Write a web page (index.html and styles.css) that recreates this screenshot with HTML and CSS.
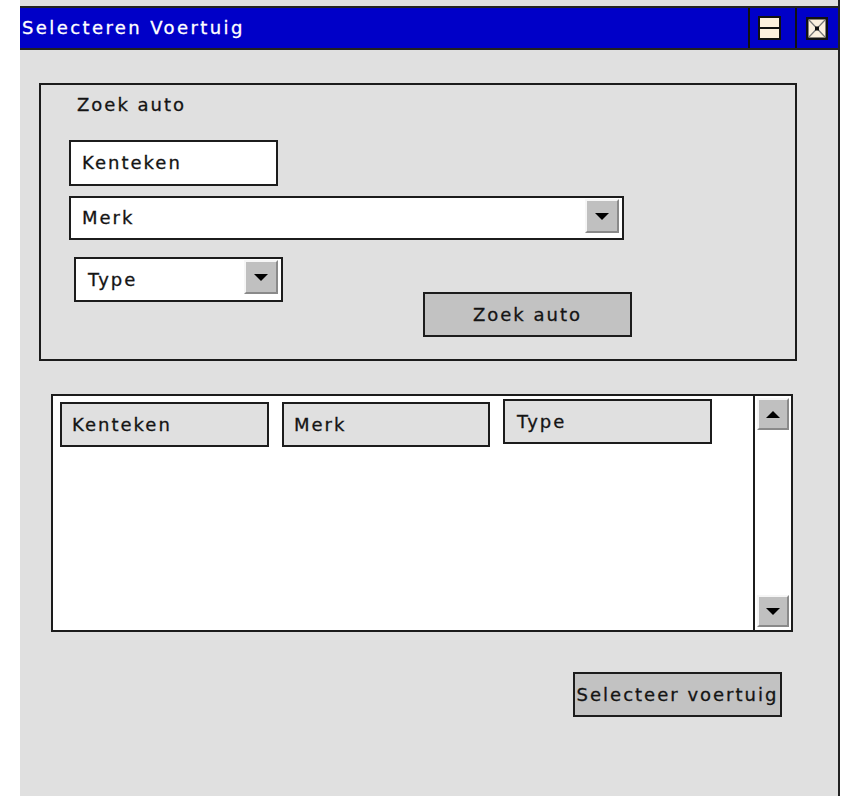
FILE: index.html
```html
<!DOCTYPE html>
<html lang="nl">
<head>
<meta charset="utf-8">
<title>Selecteren Voertuig</title>
<link rel="stylesheet" href="styles.css">
</head>
<body>
<div class="window">
  <div class="titlebar">
    <span class="title">Selecteren Voertuig</span>
    <div class="tb-btn tb-zoom">
      <svg width="23" height="24" viewBox="0 0 23 24" aria-hidden="true">
        <rect x="1" y="1" width="21" height="22" fill="#fcf0de" stroke="#111" stroke-width="2"/>
        <line x1="1" y1="12" x2="22" y2="12" stroke="#111" stroke-width="2"/>
      </svg>
    </div>
    <div class="tb-btn tb-close">
      <svg width="22" height="23" viewBox="0 0 22 23" aria-hidden="true">
        <rect x="1.25" y="1.25" width="19.5" height="20.5" fill="#fcf0de" stroke="#111" stroke-width="2.5"/>
        <line x1="3" y1="3" x2="19" y2="20" stroke="#777" stroke-width="1.2"/>
        <line x1="19" y1="3" x2="3" y2="20" stroke="#777" stroke-width="1.2"/>
        <rect x="9" y="9.5" width="4" height="4" fill="#111"/>
      </svg>
    </div>
  </div>

  <div class="content">
    <section class="group">
      <div class="group-label">Zoek auto</div>
      <div class="field field-plate">Kenteken</div>
      <div class="combo combo-make">
        <span class="combo-text">Merk</span>
        <span class="drop"></span>
      </div>
      <div class="search-row">
        <div class="combo combo-type">
          <span class="combo-text">Type</span>
          <span class="drop"></span>
        </div>
        <button class="btn btn-search" type="button">Zoek auto</button>
      </div>
    </section>

    <section class="results">
      <div class="results-cols">
        <div class="col-head col-plate">Kenteken</div>
        <div class="col-head col-make">Merk</div>
        <div class="col-head col-type">Type</div>
      </div>
      <div class="scrollbar">
        <span class="scroll-btn scroll-up"></span>
        <span class="scroll-btn scroll-down"></span>
      </div>
    </section>

    <div class="actions">
      <button class="btn btn-select" type="button">Selecteer voertuig</button>
    </div>
  </div>
</div>
</body>
</html>
```

FILE: styles.css
```css
html,
body {
  margin: 0;
  background: #ffffff;
}

body {
  font-family: "DejaVu Sans", "Liberation Sans", sans-serif;
  font-size: 18px;
  letter-spacing: 2px;
  color: #141414;
  -webkit-text-stroke: 0.3px currentColor;
}

/* dialog window */
.window {
  margin-left: 20px;
  width: 820px;
  height: 796px;
  box-sizing: border-box;
  padding-top: 6px;
  background: #e0e0e0;
  border-right: 2px solid #222;
  display: flex;
  flex-direction: column;
}

.titlebar {
  height: 44px;
  box-sizing: border-box;
  border-top: 2px solid #222;
  border-bottom: 2px solid #222;
  background: #0000c8;
  display: flex;
}

.title {
  flex: 1;
  display: flex;
  align-items: center;
  padding-left: 2px;
  line-height: 20px;
  letter-spacing: 2.4px;
  color: #ffffff;
}

.tb-btn {
  border-left: 2px solid #111;
  display: flex;
  align-items: center;
  box-sizing: border-box;
}

.tb-zoom {
  width: 47px;
  padding-left: 8px;
}

.tb-close {
  width: 43px;
  padding-left: 9px;
}

.content {
  flex: 1;
  display: flex;
  flex-direction: column;
}

/* search group */
.group {
  margin: 33px 0 0 19px;
  width: 758px;
  height: 278px;
  box-sizing: border-box;
  border: 2px solid #1c1c1c;
  padding-top: 10px;
  display: flex;
  flex-direction: column;
}

.group-label {
  line-height: 20px;
  margin-left: 36px;
}

.field,
.combo {
  box-sizing: border-box;
  border: 2px solid #1c1c1c;
  background: #ffffff;
  line-height: 20px;
}

.field {
  display: flex;
  align-items: center;
  padding-left: 11px;
}

.field-plate {
  margin: 25px 0 0 28px;
  width: 209px;
  height: 46px;
}

.combo {
  display: flex;
  align-items: flex-start;
  padding-left: 11px;
  padding-right: 3px;
}

.combo-text {
  flex: 1;
  align-self: center;
}

.combo-make {
  margin: 10px 0 0 28px;
  width: 555px;
  height: 44px;
}

.search-row {
  display: flex;
  align-items: flex-start;
  margin-top: 17px;
}

.combo-type {
  margin-left: 33px;
  width: 209px;
  height: 45px;
  padding-left: 12px;
}

/* bevelled arrow buttons */
.drop,
.scroll-btn {
  box-sizing: border-box;
  background: #c0c0c0;
  border-top: 2px solid #f6f6f6;
  border-left: 2px solid #f6f6f6;
  border-bottom: 2px solid #8a8a8a;
  border-right: 2px solid #8a8a8a;
  display: flex;
  align-items: center;
  justify-content: center;
}

.drop {
  width: 34px;
  height: 34px;
  margin-top: 1px;
}

.drop::after,
.scroll-down::after {
  content: "";
  border-left: 7px solid transparent;
  border-right: 7px solid transparent;
  border-top: 7px solid #000;
}

.scroll-up::after {
  content: "";
  border-left: 7px solid transparent;
  border-right: 7px solid transparent;
  border-bottom: 7px solid #000;
}

/* push buttons */
.btn {
  box-sizing: border-box;
  border: 2px solid #1c1c1c;
  background: #c2c2c2;
  font: inherit;
  letter-spacing: inherit;
  color: inherit;
  line-height: 20px;
  padding: 0;
  white-space: nowrap;
  display: flex;
  align-items: center;
  justify-content: center;
}

.btn-search {
  margin: 35px 0 0 140px;
  width: 209px;
  height: 45px;
}

/* result list */
.results {
  margin: 33px 0 0 31px;
  width: 742px;
  height: 238px;
  box-sizing: border-box;
  border: 2px solid #1c1c1c;
  background: #ffffff;
  display: flex;
}

.results-cols {
  flex: 1;
  display: flex;
  align-items: flex-start;
  gap: 13px;
  padding-left: 7px;
}

.col-head {
  box-sizing: border-box;
  height: 45px;
  border: 2px solid #1c1c1c;
  background: #e0e0e0;
  display: flex;
  align-items: center;
  padding-left: 10px;
  line-height: 20px;
  margin-top: 6px;
}

.col-plate {
  width: 209px;
}

.col-make {
  width: 208px;
}

.col-type {
  width: 209px;
  margin-top: 3px;
  padding-left: 12px;
}

.scrollbar {
  width: 38px;
  box-sizing: border-box;
  border-left: 2px solid #1c1c1c;
  padding: 2px 2px 3px 2px;
  display: flex;
  flex-direction: column;
  justify-content: space-between;
}

.scroll-btn {
  width: 32px;
  height: 32px;
}

.actions {
  display: flex;
  justify-content: flex-end;
  margin-top: 40px;
  padding-right: 56px;
}

.btn-select {
  width: 209px;
  height: 45px;
}
```
